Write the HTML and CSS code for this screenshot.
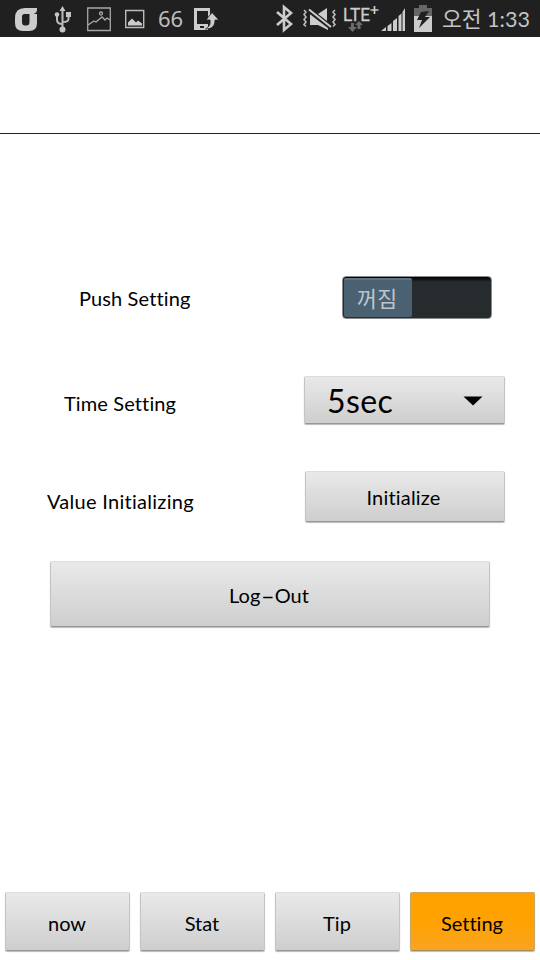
FILE: index.html
```html
<!DOCTYPE html>
<html lang="ko">
<head>
<meta charset="utf-8">
<title>Setting</title>
<link rel="stylesheet" href="styles.css">
</head>
<body>
<header class="status">
  <div class="notifications">
    <svg width="22" height="37" viewBox="15 0 22 37"><path fill="#ccc" fill-rule="evenodd" d="M37 8v1.500q0 3.500-3.500 4.500H37v9q0 8-8 8h-6q-8 0-8-8v-5q0-10 10-10zM24.500 14q-2.500 0-2.500 2.500V22q0 3.500 3 3.500h1.500q3 0 3-3.500v-8z"/></svg>
    <svg class="usb" width="18" height="37" viewBox="54 0 18 37"><g fill="none" stroke="#bbb" stroke-width="2"><path d="M62.500 11v18M57 15v5q0 4 5.500 4M68.500 15v4q0 3-6 3"/></g><path fill="#c4c4c4" d="m62.500 6 3 5h-6zM66 12h5v5h-5z"/><circle cx="57" cy="14.500" r="2.300" fill="#c4c4c4"/><circle cx="62.500" cy="29.500" r="3" fill="#c4c4c4"/></svg>
    <svg class="photo" width="24" height="37" viewBox="87 0 24 37"><g fill="none" stroke="#a8a8a8" stroke-width="1.300"><path d="M87.700 8h22.600v22.500H87.700zM88 25l6-4 2 1 6-5 3 3 2-2 3 2"/><circle cx="101" cy="13.500" r="1.500"/></g></svg>
    <svg class="picture" width="20" height="37" viewBox="125 0 20 37"><path d="M125.700 10.500h18v17h-18z" fill="none" stroke="#bbb" stroke-width="1.400"/><path fill="#ccc" d="M128 25.500v-3l4-4 4 4 2-2 4 3v2z"/></svg>
    <span class="count">66</span>
    <svg class="phone" width="26" height="37" viewBox="194 0 26 37"><path fill="#ccc" fill-rule="evenodd" d="M194 8h16v7l-2 3v-7h-11v13h11v6h-14zM200 26v2h4v-2z"/><path fill="#ccc" stroke="#202020" stroke-width=".8" d="m212 12.500 7 7.500h-4c0 6-3 9-9.500 9 4-3 5-4 4.500-9h-4z"/></svg>
  </div>
  <div class="system">
    <svg width="17" height="37" viewBox="276 0 17 37"><path d="m277 12 14 12-7 6V7l7 6-14 12" fill="none" stroke="#ccc" stroke-width="2.600"/></svg>
    <svg class="mute" width="35" height="37" viewBox="303 0 35 37"><path fill="#ccc" d="M310 14h6l12 11v5l-10-5h-8zM318 14l9-6v13z"/><path d="m309 11 22 17" stroke="#202020" stroke-width="4"/><path d="m309 9.500 22 17.500" stroke="#ccc" stroke-width="2"/><path d="m304 10 2 2-2 2.500 2 2.500-2 2.500 2 2.500-2 2.500 2 2M335 10l-2 2 2 2.500-2 2.500 2 2.500-2 2.500 2 2.500-2 2" fill="none" stroke="#bbb" stroke-width="1.600"/></svg>
    <svg class="lte" width="36" height="37" viewBox="343 0 36 37"><text x="343" y="21" class="lte-text" textLength="27" lengthAdjust="spacingAndGlyphs">LTE</text><path d="M374.500 6v8M370.500 10h8" stroke="#ccc" stroke-width="1.700"/><path fill="#6b6b6b" d="M351 23h3v4h3l-4.500 5-4.500-5h3zM357.500 29v-4H355l4-4 4 4h-2.500v4z"/></svg>
    <svg class="signal" width="24" height="37" viewBox="381 0 24 37"><path fill="#ccc" d="m381 31 5-4v4zM387.500 26l4-3v8h-4zM393 21l4-3v13h-4zM398.500 16l3-2.500V31h-3zM402.500 12l2.500-4v23h-2.500z"/></svg>
    <svg class="battery" width="18" height="37" viewBox="414 0 18 37"><path fill="#666" d="M419 5h8v3h5v8h-18V8h5z"/><path fill="#ccc" d="M414 16h18v16h-18z"/><path fill="#202020" d="m421 12 8-1-4 6h5l-11 11 3-8h-5z"/></svg>
    <span class="clock">오전 1:33</span>
  </div>
</header>
<div class="title-bar"></div>
<main class="settings">
  <div class="row push">
    <span class="label">Push Setting</span>
    <div class="switch"><span class="thumb">꺼짐</span></div>
  </div>
  <div class="row time">
    <span class="label">Time Setting</span>
    <div class="button spinner"><span class="value">5sec</span><svg width="20" height="10" viewBox="0 0 20 10"><path d="M.5.500h19L10 9.500z"/></svg></div>
  </div>
  <div class="row values">
    <span class="label">Value Initializing</span>
    <div class="button initialize"><span>Initialize</span></div>
  </div>
  <div class="button logout"><span>Log<span class="dash">-</span>Out</span></div>
</main>
<nav class="tabs">
  <div class="button now"><span>now</span></div>
  <div class="button stat"><span>Stat</span></div>
  <div class="button tip"><span>Tip</span></div>
  <div class="button active"><span>Setting</span></div>
</nav>
</body>
</html>
```
FILE: styles.css
```css
* { box-sizing: border-box; }
body {
  margin: 0;
  width: 540px;
  height: 960px;
  overflow: hidden;
  display: flex;
  flex-direction: column;
  background: #fff;
  color: #000;
  font: 20px/24px Lato, "Noto Sans CJK KR", sans-serif;
  font-variant-ligatures: none;
}
svg { display: block; flex: none; }
.status {
  flex: none;
  height: 37px;
  padding: 0 9px 0 15px;
  display: flex;
  justify-content: space-between;
  background: #202020;
  color: #bebebe;
}
.notifications, .system { display: flex; }
.usb { margin-left: 17px; }
.photo { margin-left: 15px; }
.picture { margin-left: 14px; }
.count { width: 24px; margin-left: 13px; font: 22px/37px "Noto Sans", sans-serif; }
.phone { margin-left: 12px; }
.mute { margin-left: 10px; }
.lte { margin-left: 5px; }
.lte-text { font: 400 18px Roboto, sans-serif; fill: #ccc; stroke: #ccc; stroke-width: .3px; }
.signal { margin-left: 2px; }
.battery { margin-left: 9px; }
.clock {
  width: 89px;
  margin-left: 10px;
  font: 400 21.5px/38px Lato, "Noto Sans CJK KR", sans-serif;
  color: #c4c4c4;
  white-space: nowrap;
}
.title-bar { flex: none; height: 97px; border-bottom: 1px solid #222; }
.settings { flex: 1; padding-top: 142px; }
.row { display: flex; justify-content: space-between; align-items: flex-start; }
.label { white-space: nowrap; letter-spacing: .12px; }
.push { height: 100px; padding: 0 48px 0 79px; }
.push .label { margin-top: 10px; }
.time { height: 95px; padding: 0 35px 0 64px; }
.time .label { margin-top: 15px; }
.values { height: 90px; padding: 0 35px 0 47px; }
.values .label { margin-top: 18px; letter-spacing: .28px; }
.switch {
  width: 150px;
  height: 43px;
  padding: 1px;
  border: 1px solid #8b8b8b;
  border-radius: 4px;
  background: linear-gradient(#000, #262b2e 5px);
}
.thumb {
  display: block;
  width: 68px;
  height: 39px;
  padding-right: 2px;
  border-radius: 2px;
  background: #4a6172;
  border-top: 2px solid #637381;
  color: #bcc5cc;
  font: 22px/35px "Noto Sans CJK KR", sans-serif;
  text-align: center;
}
.button {
  display: flex;
  align-items: center;
  justify-content: center;
  border: 1px solid #c4c4c4;
  border-top-color: #ddd;
  border-bottom-color: #969696;
  border-radius: 2px;
  background: linear-gradient(#e9e9e9, #cecece);
  box-shadow: 0 1px 1px #bbb;
  white-space: nowrap;
}
.spinner {
  width: 201px;
  height: 48px;
  padding: 2px 21px 0 22px;
  justify-content: space-between;
  font-size: 32px;
}
.value { letter-spacing: .4px; }
.spinner svg { margin-top: -1px; }
.initialize { width: 200px; height: 51px; padding: 1px 3px 0 0; }
.initialize span { letter-spacing: .2px; }
.logout { width: 440px; height: 66px; margin: 0 0 0 50px; padding: 1px 2px 0 0; }
.dash { display: inline-block; transform: scaleX(1.9); margin: 0 3.5px; }
.tabs {
  flex: none;
  height: 68px;
  padding: 0 5px;
  display: grid;
  grid-template-columns: repeat(4, 1fr);
  gap: 10px;
}
.tabs .button { height: 59px; padding: 2px 1px 0 0; }
.tabs .active {
  background: linear-gradient(#ffa200 50%, #f9a422);
  border-color: #c9a66a;
  border-bottom-color: #a58a5c;
}
```
